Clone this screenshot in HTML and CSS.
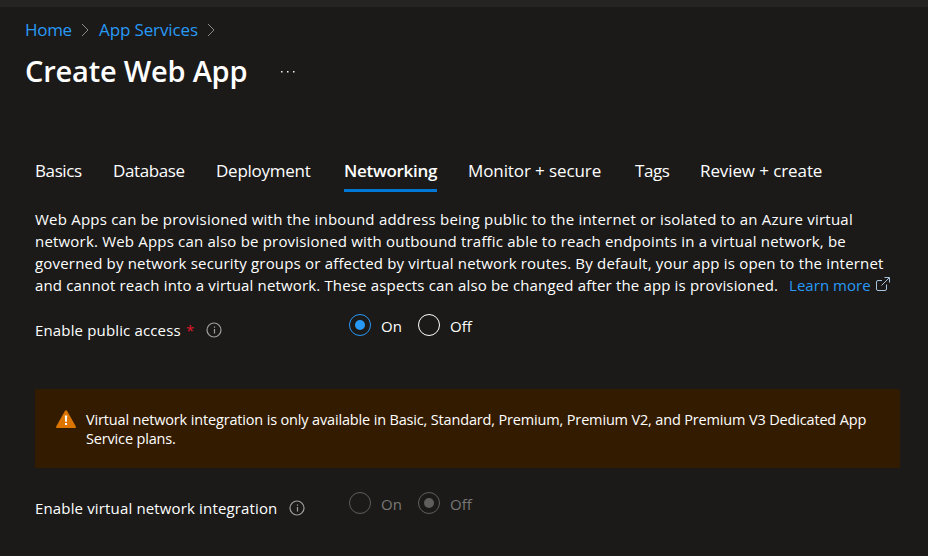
FILE: index.html
```html
<!DOCTYPE html>
<html lang="en">
<head>
<meta charset="utf-8">
<title>Create Web App</title>
<link rel="stylesheet" href="styles.css">
</head>
<body>
<div class="topbar"></div>
<header class="header">
  <nav class="breadcrumb">
    <a class="crumb crumb-home">Home</a>
    <svg class="chevron" width="8" height="14" viewBox="0 0 8 14"><path d="M1 1l6 6-6 6"/></svg>
    <a class="crumb crumb-services">App Services</a>
    <svg class="chevron" width="8" height="14" viewBox="0 0 8 14"><path d="M1 1l6 6-6 6"/></svg>
  </nav>
  <div class="title-row">
    <h1 class="title">Create Web App</h1>
    <svg class="more" width="14" height="2" viewBox="0 0 14 2"><path d="M0 0h1.500v1.500H0zM6 0h1.500v1.500H6zM12 0h1.500v1.500h-1.500z"/></svg>
  </div>
</header>
<nav class="tabs">
  <a class="tab t-basics">Basics</a>
  <a class="tab t-database">Database</a>
  <a class="tab t-deployment">Deployment</a>
  <a class="tab t-networking active">Networking</a>
  <a class="tab t-monitor">Monitor + secure</a>
  <a class="tab t-tags">Tags</a>
  <a class="tab t-review">Review + create</a>
</nav>
<main class="content">
  <div class="intro">
    <span class="line l1">Web Apps can be provisioned with the inbound address being public to the internet or isolated to an Azure virtual</span>
    <span class="line l2">network. Web Apps can also be provisioned with outbound traffic able to reach endpoints in a virtual network, be</span>
    <span class="line l3">governed by network security groups or affected by virtual network routes. By default, your app is open to the internet</span>
    <div class="last-line"><span class="line l4">and cannot reach into a virtual network. These aspects can also be changed after the app is provisioned.</span><a class="learn">Learn more</a><svg class="external" width="14" height="14" viewBox="0 0 14 14"><path d="M6 3.500H2Q.5 3.500 .5 5v7q0 1.500 1.500 1.500h7q1.500 0 1.500-1.500V7.500M5.500 8.500L13 1M8.500 .5h5v5"/></svg></div>
  </div>
  <div class="field public-field">
    <div class="label"><span class="lbl-public">Enable public access</span><span class="required">*</span>
      <svg class="info" width="16" height="16" viewBox="0 0 16 16"><circle cx="8" cy="8" r="7"/><path d="M8.500 7v4.500M8.500 4.500v1.200"/></svg>
    </div>
    <div class="radios">
      <span class="radio on-checked"></span><span class="option opt-on">On</span>
      <span class="radio"></span><span class="option opt-off">Off</span>
    </div>
  </div>
  <div class="warning">
    <svg class="warn-icon" width="20" height="18" viewBox="0 0 20 18"><path class="tri" d="M10 0.300Q10.700 .3 11.100 1L19.700 16.300Q20.300 18 18.800 18H1.200Q-.3 18 .3 16.300L8.900 1Q9.300 .3 10 .3z"/><path class="bang" d="M8.800 5.500h2.400l-.3 6.300H9.100zM9 13h2v2H9z"/></svg>
    <div class="warn-text"><span class="line w1">Virtual network integration is only available in Basic, Standard, Premium, Premium V2, and Premium V3 Dedicated App</span><span class="line w2">Service plans.</span></div>
  </div>
  <div class="field vnet-field">
    <div class="label"><span class="lbl-vnet">Enable virtual network integration</span>
      <svg class="info" width="16" height="16" viewBox="0 0 16 16"><circle cx="8" cy="8" r="7"/><path d="M8.500 7v4.500M8.500 4.500v1.200"/></svg>
    </div>
    <div class="radios disabled">
      <span class="radio"></span><span class="option opt-on">On</span>
      <span class="radio on-checked"></span><span class="option opt-off">Off</span>
    </div>
  </div>
</main>
<div class="bottom-line"></div>
</body>
</html>
```
FILE: styles.css
```css
* { box-sizing: border-box; }
body {
  margin: 0;
  width: 928px;
  height: 556px;
  overflow: hidden;
  display: flex;
  flex-direction: column;
  background: #1b1a19;
  color: #fff;
  font-family: "Open Sans", "Noto Sans", sans-serif;
  font-size: 15px;
  white-space: nowrap;
}
svg { display: block; flex: none; fill: none; }
.topbar { height: 7px; background: #252423; }
.header { height: 142px; padding: 10px 25px 0; }
.breadcrumb { display: flex; align-items: center; height: 24px; font-size: 17px; color: #2899f5; }
.crumb { flex: none; letter-spacing: -0.3px; }
.crumb-home { width: 56px; }
.crumb-services { width: 108px; margin-left: 10px; letter-spacing: -0.12px; }
.chevron { stroke: #8a8886; margin-top: 1px; }
.title-row { display: flex; align-items: center; height: 44px; margin-top: 7px; }
.title { margin: 0; width: 256px; font-size: 29px; font-weight: 600; letter-spacing: -0.2px; }
.more { fill: #f3f2f1; margin-top: 4px; }
.tabs { display: flex; height: 43px; padding-left: 35px; font-size: 17px; line-height: 44px; }
.tab { flex: none; height: 43px; letter-spacing: -0.4px; }
.t-basics { width: 46px; margin-right: 32px; }
.t-database { width: 72px; margin-right: 31px; }
.t-deployment { width: 95px; margin-right: 33px; letter-spacing: -0.25px; }
.t-networking { width: 93px; margin-right: 31px; letter-spacing: -0.3px; }
.t-monitor { width: 134px; margin-right: 33px; letter-spacing: -0.1px; }
.t-tags { width: 34px; margin-right: 31px; }
.t-review { letter-spacing: -0.1px; }
.active { font-weight: 600; border-bottom: 3px solid #0078d4; }
.content { padding: 16px 28px 0 35px; }
.line { display: block; width: max-content; }
.intro { line-height: 22px; }
.l1 { letter-spacing: 0.22px; }
.l2 { letter-spacing: 0.19px; }
.l3 { letter-spacing: 0.185px; }
.last-line { display: flex; }
.l4 { width: 754px; letter-spacing: 0.16px; }
.learn { width: 87px; color: #2899f5; letter-spacing: 0.05px; }
.external { stroke: #a6c4de; margin-top: 3px; }
.field { display: flex; }
.public-field { height: 24px; margin-top: 17px; }
.label { display: flex; align-items: center; width: 314px; height: 24px; margin-top: 5px; }
.lbl-public { width: 151px; letter-spacing: 0.15px; }
.required { width: 19px; color: #e3172a; }
.lbl-vnet { width: 253px; letter-spacing: 0.15px; }
.info { stroke: #a19f9d; stroke-width: 1.2; margin-left: 0.5px; }
.radios { display: flex; align-items: flex-start; margin-top: 1px; }
.radio { display: grid; place-items: center; flex: none; width: 22px; height: 22px; border: 1px solid #fff; border-radius: 50%; }
.on-checked { border-color: #2899f5; }
.on-checked::after { content: ""; width: 10px; height: 10px; border-radius: 50%; background: #2899f5; }
.option { line-height: 24px; margin-left: 10px; }
.opt-on { width: 37px; }
.disabled { color: #797775; }
.disabled .radio { border-color: #605e5c; }
.disabled .on-checked::after { background: #605e5c; }
.warning { display: flex; width: 865px; height: 79px; margin-top: 52px; padding: 21px 0 0 21px; border-radius: 2px; background: #331b00; }
.warn-icon { margin-right: 10px; }
.tri { fill: #db7500; }
.bang { fill: #fff; }
.warn-text { font-size: 14.500px; line-height: 19px; letter-spacing: -0.16px; }
.vnet-field { margin-top: 23px; }
.bottom-line { height: 1px; margin-top: auto; background: #211a1a; }
```
